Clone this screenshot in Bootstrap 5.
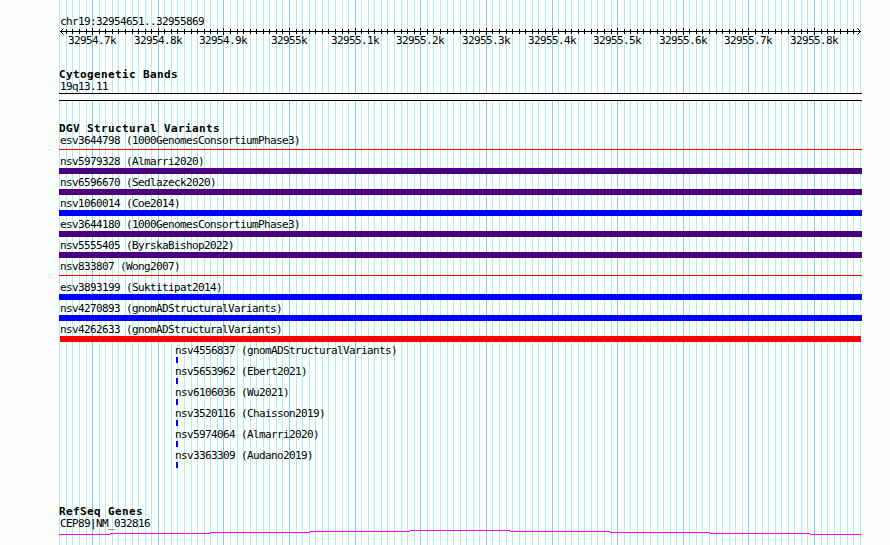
<!DOCTYPE html>
<html lang="en">
<head>
    <meta charset="UTF-8">
    <meta name="viewport" content="width=device-width, initial-scale=1.0">
    <link href="https://cdn.jsdelivr.net/npm/bootstrap@5.3.0/dist/css/bootstrap.min.css" rel="stylesheet">
    <title>chr19:32954651..32955869</title>
    <style>
        body {
            background: #fdfffc;
            color: #000;
            font: 11px/13px "DejaVu Sans Mono", monospace;
            letter-spacing: -0.622px;
        }
        svg { display: block; }
        .panel { width: 803px; height: 545px; margin-left: 59px; padding-top: 15px; }
        .grid-lines { z-index: -1; }
        .label { height: 13px; padding-left: 1px; white-space: pre; }
        .track-title { height: 12px; font-weight: bold; letter-spacing: 0.378px; white-space: pre; }
        .axis { height: 40px; }
        .band { height: 8px; margin-bottom: 21px; background: #fdfffc; border-color: #000 !important; }
        .feature { height: 21px; }
        .bar { height: 6px; }
        .thin { height: 1px; margin-top: 2px; background: #f00; }
        .indigo { background: #4b0082; }
        .blue { background: #00f; }
        .red { background: #f00; margin: 0 1px; }
        .shifted { margin-left: 115px; }
        .shifted .bar { width: 2px; margin-left: 2px; }
        .variants { height: 383px; }
    </style>
</head>
<body class="overflow-hidden">
    <main class="panel position-relative">
        <svg id="grid" class="grid-lines position-absolute top-0 start-0" width="803" height="545" shape-rendering="crispEdges"></svg>

        <div class="label">chr19:32954651..32955869</div>
        <svg id="axis" class="axis" width="803" height="40"></svg>

        <section>
            <div class="track-title">Cytogenetic Bands</div>
            <div class="label">19q13.11</div>
            <div class="band border-top border-bottom"></div>
        </section>

        <section class="variants">
            <div class="track-title">DGV Structural Variants</div>
            <div id="variants"></div>
        </section>

        <section>
            <div class="track-title">RefSeq Genes</div>
            <div class="label">CEP89|NM_032816</div>
            <svg width="803" height="6" shape-rendering="crispEdges">
                <path fill="#f0f" d="M0 4h51v1H0zM51 3h100v1H51zM151 2h100v1H151zM251 1h100v1H251zM351 0h100v1H351zM451 1h100v1H451zM551 2h100v1H551zM651 3h100v1H651zM751 4h51v1H751z"/>
            </svg>
        </section>
    </main>

    <script src="https://cdn.jsdelivr.net/npm/bootstrap@5.3.0/dist/js/bootstrap.bundle.min.js"></script>
    <script>
        const START = 32954651;
        const SCALE = 800 / 1219;

        const variants = [
            ['esv3644798 (1000GenomesConsortiumPhase3)', 'thin'],
            ['nsv5979328 (Almarri2020)', 'bar indigo'],
            ['nsv6596670 (Sedlazeck2020)', 'bar indigo'],
            ['nsv1060014 (Coe2014)', 'bar blue'],
            ['esv3644180 (1000GenomesConsortiumPhase3)', 'bar indigo'],
            ['nsv5555405 (ByrskaBishop2022)', 'bar indigo'],
            ['nsv833807 (Wong2007)', 'thin'],
            ['esv3893199 (Suktitipat2014)', 'bar blue'],
            ['nsv4270893 (gnomADStructuralVariants)', 'bar blue'],
            ['nsv4262633 (gnomADStructuralVariants)', 'bar red'],
            ['nsv4556837 (gnomADStructuralVariants)', 'bar blue', 'shifted'],
            ['nsv5653962 (Ebert2021)', 'bar blue', 'shifted'],
            ['nsv6106036 (Wu2021)', 'bar blue', 'shifted'],
            ['nsv3520116 (Chaisson2019)', 'bar blue', 'shifted'],
            ['nsv5974064 (Almarri2020)', 'bar blue', 'shifted'],
            ['nsv3363309 (Audano2019)', 'bar blue', 'shifted']
        ];

        document.getElementById('variants').innerHTML = variants.map(([name, glyph, place]) =>
            `<div class="feature ${place || ''}"><div class="label">${name}</div><div class="${glyph}"></div></div>`
        ).join('');

        // one line every 10 bp, a darker one with a label every 100 bp
        let lines = '';
        let ticks = '<rect x="1" y="3" width="801" height="1"/>';
        let labels = '';
        for (let pos = 32954650; pos <= 32955870; pos += 10) {
            const x = Math.round(1 + (pos - START) * SCALE);
            const major = pos % 100 === 0;
            lines += `<rect x="${x}" y="0" width="1" height="545" fill="${major ? '#87ceeb' : '#afeeee'}"/>`;
            if (x > 0 && x < 801) {
                ticks += major
                    ? `<rect x="${x}" y="0" width="1" height="7"/>`
                    : `<rect x="${x}" y="1" width="1" height="5"/>`;
            }
            if (major) {
                const text = pos / 1000 + 'k';
                labels += `<text x="${x - text.length * 3}" y="16">${text}</text>`;
            }
        }
        document.getElementById('grid').innerHTML = lines;
        document.getElementById('axis').innerHTML =
            `<g shape-rendering="crispEdges">${ticks}</g>` +
            '<path d="M4.5 .5l-3 3 3 3M798.5 .5l3 3-3 3" fill="none" stroke="#000"/>' + labels;
    </script>
</body>
</html>
